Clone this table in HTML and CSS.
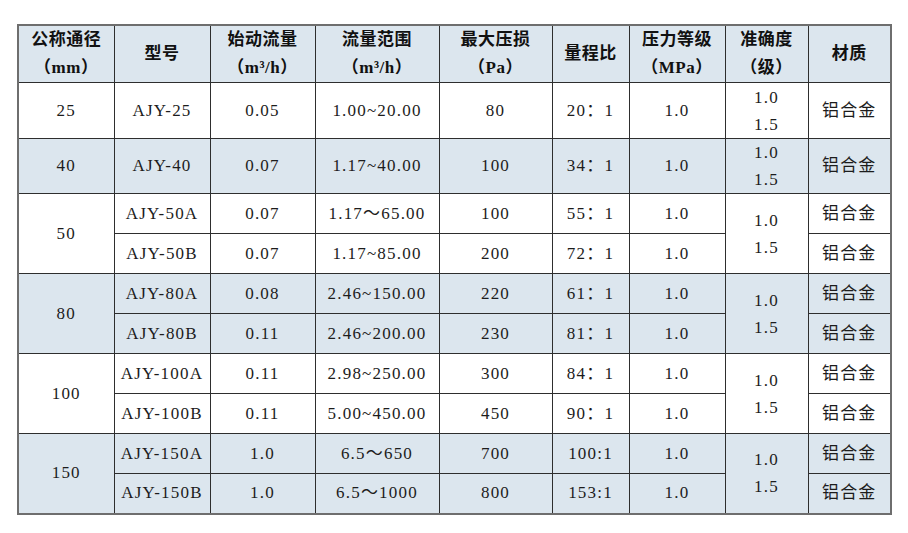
FILE: index.html
```html
<!DOCTYPE html>
<html lang="zh">
<head>
<meta charset="utf-8">
<title>规格参数</title>
<link rel="stylesheet" href="styles.css">
</head>
<body>
<div class="wrap">
<table class="spec">
<colgroup>
<col class="c1"><col class="c2"><col class="c3"><col class="c4"><col class="c5"><col class="c6"><col class="c7"><col class="c8"><col class="c9">
</colgroup>
<thead>
<tr class="head">
<th>公称通径<br>（mm）</th>
<th>型号</th>
<th>始动流量<br>（m³/h）</th>
<th>流量范围<br>（m³/h）</th>
<th>最大压损<br>（Pa）</th>
<th>量程比</th>
<th>压力等级<br>（MPa）</th>
<th>准确度<br>（级）</th>
<th>材质</th>
</tr>
</thead>
<tbody>
<tr class="tall white">
<td>25</td><td>AJY-25</td><td>0.05</td><td>1.00~20.00</td><td>80</td><td>20：1</td><td>1.0</td><td class="acc">1.0<br>1.5</td><td class="cn">铝合金</td>
</tr>
<tr class="tall2 blue">
<td>40</td><td>AJY-40</td><td>0.07</td><td>1.17~40.00</td><td>100</td><td>34：1</td><td>1.0</td><td class="acc">1.0<br>1.5</td><td class="cn">铝合金</td>
</tr>
<tr class="row white">
<td rowspan="2">50</td><td>AJY-50A</td><td>0.07</td><td>1.17～65.00</td><td>100</td><td>55：1</td><td>1.0</td><td rowspan="2" class="acc">1.0<br>1.5</td><td class="cn">铝合金</td>
</tr>
<tr class="row white">
<td>AJY-50B</td><td>0.07</td><td>1.17~85.00</td><td>200</td><td>72：1</td><td>1.0</td><td class="cn">铝合金</td>
</tr>
<tr class="row blue">
<td rowspan="2">80</td><td>AJY-80A</td><td>0.08</td><td>2.46~150.00</td><td>220</td><td>61：1</td><td>1.0</td><td rowspan="2" class="acc">1.0<br>1.5</td><td class="cn">铝合金</td>
</tr>
<tr class="row blue">
<td>AJY-80B</td><td>0.11</td><td>2.46~200.00</td><td>230</td><td>81：1</td><td>1.0</td><td class="cn">铝合金</td>
</tr>
<tr class="row white">
<td rowspan="2">100</td><td>AJY-100A</td><td>0.11</td><td>2.98~250.00</td><td>300</td><td>84：1</td><td>1.0</td><td rowspan="2" class="acc">1.0<br>1.5</td><td class="cn">铝合金</td>
</tr>
<tr class="row white">
<td>AJY-100B</td><td>0.11</td><td>5.00~450.00</td><td>450</td><td>90：1</td><td>1.0</td><td class="cn">铝合金</td>
</tr>
<tr class="row blue">
<td rowspan="2">150</td><td>AJY-150A</td><td>1.0</td><td>6.5～650</td><td>700</td><td>100:1</td><td>1.0</td><td rowspan="2" class="acc">1.0<br>1.5</td><td class="cn">铝合金</td>
</tr>
<tr class="row blue">
<td>AJY-150B</td><td>1.0</td><td>6.5～1000</td><td>800</td><td>153:1</td><td>1.0</td><td class="cn">铝合金</td>
</tr>
</tbody>
</table>
</div>
</body>
</html>
```

FILE: styles.css
```css
html, body {
  margin: 0;
  padding: 0;
  background: #ffffff;
}

.wrap {
  padding: 24px 0 0 17px;
}

.spec {
  border-collapse: collapse;
  table-layout: fixed;
  width: 873px;
  border: 2px solid #6e6e6e;
  font-family: "Liberation Serif", "Noto Sans CJK SC", serif;
  font-size: 17px;
  line-height: 20px;
  color: #1c1c1c;
}

.c1 { width: 96px; }
.c2 { width: 96px; }
.c3 { width: 105px; }
.c4 { width: 124px; }
.c5 { width: 113px; }
.c6 { width: 77px; }
.c7 { width: 96px; }
.c8 { width: 83px; }
.c9 { width: 83px; }

.spec th,
.spec td {
  border: 1px solid #2e2e2e;
  padding: 0;
  text-align: center;
  vertical-align: middle;
  letter-spacing: 1.2px;
}

.head {
  height: 57px;
  background: #dce6ee;
}

.head th {
  font-weight: 700;
  line-height: 28px;
  color: #111111;
  letter-spacing: 0.5px;
}

.white { background: #ffffff; }
.blue { background: #dce6ee; }

.tall { height: 56px; }
.tall2 { height: 55px; }
.row { height: 40px; }

.acc {
  line-height: 27px;
}

.cn {
  letter-spacing: 1px;
}
```
